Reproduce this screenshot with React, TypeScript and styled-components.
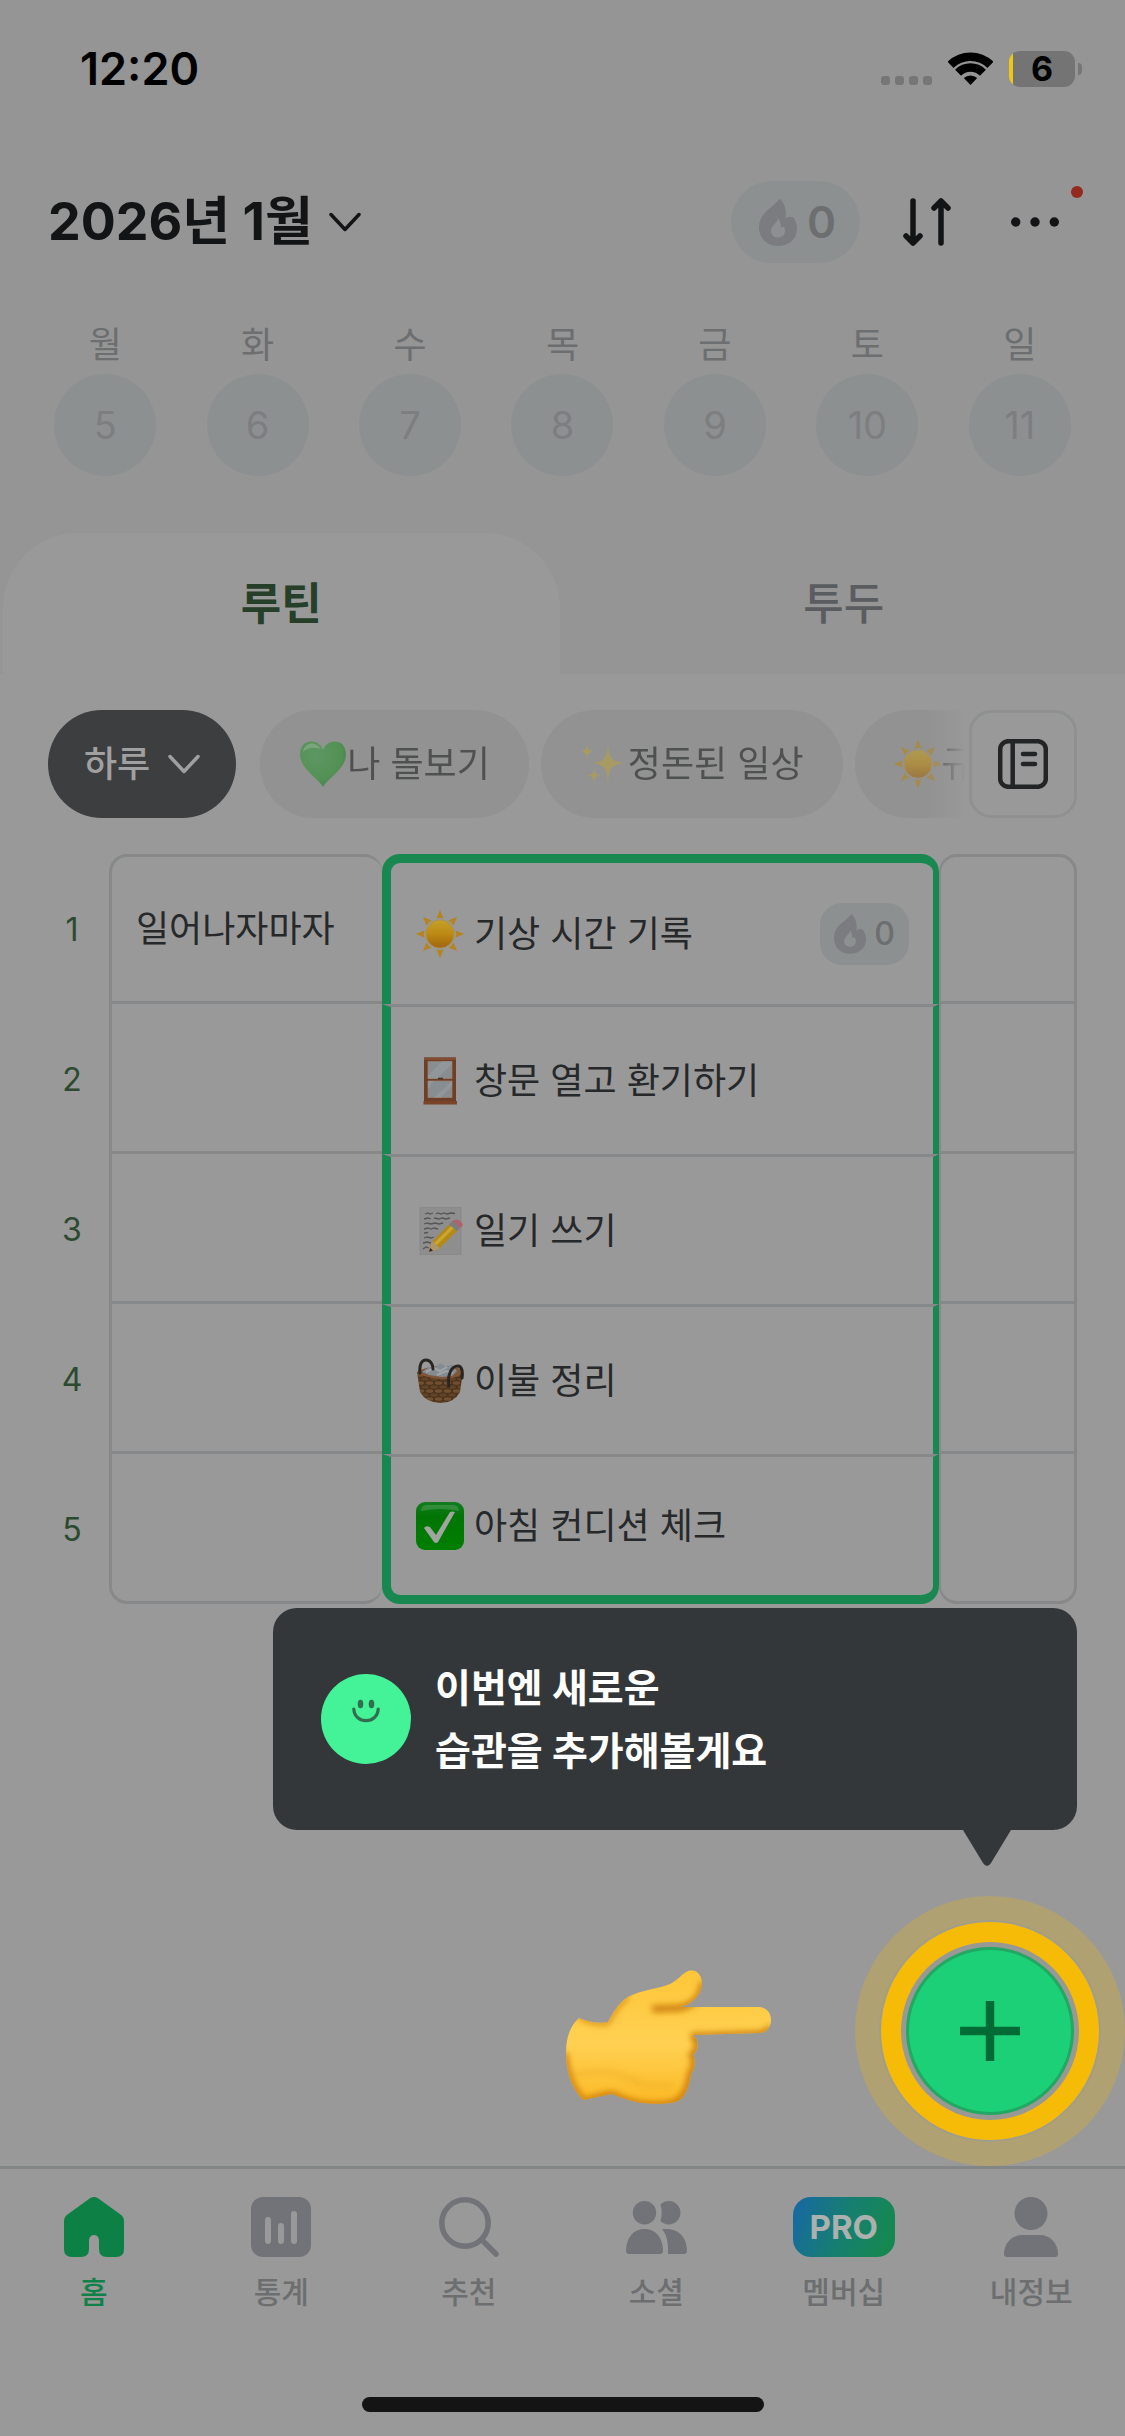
import React from 'react';
import styled, { createGlobalStyle } from 'styled-components';

const color = {
  header: '#959595',
  surface: '#999999',
  ink: '#131415',
  text: '#26282a',
  muted: '#6c6e70',
  icon: '#717378',
  line: '#868889',
  pill: '#8d9091',
  chip: '#929292',
  flame: '#7a7c7f',
  green: '#188850',
  dark: '#343739',
};

const GlobalStyle = createGlobalStyle`
  *, *::before, *::after { box-sizing: border-box; }
  body {
    margin: 0;
    background: ${color.surface};
    color: ${color.text};
    font-family: Inter, 'Noto Sans CJK KR', 'Noto Sans', sans-serif;
  }
  button {
    margin: 0;
    padding: 0;
    border: 0;
    background: none;
    color: inherit;
    font: inherit;
    cursor: pointer;
  }
  svg { display: block; flex: none; }
`;

const Page = styled.div`
  display: flex;
  flex-direction: column;
  min-height: 100vh;
  background: ${color.surface};
`;

const Top = styled.header`
  background: ${color.header};
`;

const StatusBar = styled.div`
  display: flex;
  align-items: center;
  justify-content: space-between;
  height: 138px;
  padding: 0 43px 0 80px;
  color: #000;
`;

const Clock = styled.time`
  font-size: 45px;
  font-weight: 600;
  line-height: 56px;
`;

const StatusIcons = styled.div`
  display: flex;
  align-items: flex-end;
  gap: 16px;
`;

const Signal = styled.div`
  display: flex;
  gap: 5px;
  padding-bottom: 2px;
`;

const SignalDot = styled.span`
  width: 9px;
  height: 9px;
  border-radius: 3px;
  background: #767676;
`;

const WifiWrap = styled.div`
  padding-bottom: 2px;
`;

const Battery = styled.div`
  display: flex;
  align-items: center;
  gap: 3px;
`;

const BatteryBody = styled.div`
  width: 66px;
  height: 36px;
  border-radius: 11px;
  background: linear-gradient(to right, #f0c814 4px, #747474 4px);
  font-size: 34px;
  font-weight: 700;
  line-height: 36px;
  text-align: center;
`;

const BatteryCap = styled.span`
  width: 4px;
  height: 12px;
  border-radius: 0 4px 4px 0;
  background: #767676;
`;

const TitleRow = styled.div`
  display: flex;
  align-items: center;
  justify-content: space-between;
  padding: 43px 66px 0 48px;
`;

const MonthButton = styled.button`
  display: flex;
  align-items: center;
  gap: 16px;
  color: ${color.ink};
  font-size: 52px;
  font-weight: 700;
  line-height: 64px;
`;

const Actions = styled.div`
  display: flex;
  align-items: center;
`;

const StreakPill = styled.button`
  display: flex;
  align-items: center;
  gap: 10px;
  height: 82px;
  margin-right: 43px;
  padding: 0 24px 0 28px;
  border-radius: 41px;
  background: ${color.pill};
  color: ${color.muted};
  font-size: 44px;
  font-weight: 600;
  line-height: 56px;
`;

const MoreButton = styled.button`
  position: relative;
  margin-left: 60px;
`;

const NewDot = styled.span`
  position: absolute;
  top: -12px;
  right: -24px;
  width: 12px;
  height: 12px;
  border-radius: 50%;
  background: #94291f;
`;

const Week = styled.div`
  display: grid;
  grid-template-columns: repeat(7, 1fr);
  padding: 58px 29px 57px;
`;

const Day = styled.button`
  display: flex;
  flex-direction: column;
  align-items: center;
  gap: 5px;
`;

const Weekday = styled.span`
  color: ${color.muted};
  font-size: 36px;
  line-height: 48px;
`;

const DayNumber = styled.span`
  width: 102px;
  height: 102px;
  border-radius: 50%;
  background: ${color.pill};
  color: #7c7e80;
  font-size: 38px;
  line-height: 102px;
  text-align: center;
`;

const Tabs = styled.div`
  display: grid;
  grid-template-columns: 1fr 1fr;
`;

const Tab = styled.button<{ $active?: boolean }>`
  height: 141px;
  margin: 0 3px;
  border-radius: 75px 75px 0 0;
  background: ${(p) => (p.$active ? color.surface : 'transparent')};
  color: ${(p) => (p.$active ? '#263f29' : '#5a5c5f')};
  font-size: 44px;
  font-weight: ${(p) => (p.$active ? 700 : 500)};
  line-height: 56px;
`;

const Main = styled.main`
  position: relative;
  flex: 1;
  padding: 36px 48px 562px;
`;

const Filters = styled.div`
  display: flex;
  margin-bottom: 36px;
`;

const DayFilter = styled.button`
  display: flex;
  align-items: center;
  gap: 18px;
  height: 108px;
  padding: 0 36px;
  border-radius: 54px;
  background: #3c3e40;
  color: #a0a0a0;
  font-size: 36px;
  font-weight: 500;
  line-height: 48px;
  white-space: nowrap;
`;

const ChipScroller = styled.div`
  display: flex;
  flex: 1;
  gap: 12px;
  min-width: 0;
  margin-left: 24px;
  overflow: hidden;
  mask-image: linear-gradient(to right, #000 calc(100% - 40px), transparent calc(100% - 4px));
`;

const Chip = styled.button`
  display: flex;
  flex: none;
  align-items: center;
  height: 108px;
  padding: 0 39px;
  border-radius: 54px;
  background: ${color.chip};
  color: #4f5050;
  font-size: 36px;
  line-height: 48px;
  white-space: nowrap;

  svg { opacity: 0.6; }
`;

const BookButton = styled.button`
  display: grid;
  place-items: center;
  width: 108px;
  height: 108px;
  border: 3px solid #8f9091;
  border-radius: 22px;
`;

const Board = styled.table`
  width: 100%;
  table-layout: fixed;
  border-spacing: 0;
  font-size: 36px;
  line-height: 48px;
`;

const NumberCol = styled.col`
  width: 61px;
`;

const TimeCol = styled.col`
  width: 273px;
`;

const RestCol = styled.col`
  width: 138px;
`;

const RowNumber = styled.th`
  height: 150px;
  padding: 2px 13px 0 0;
  color: #2b4a2f;
  font-size: 32px;
  font-weight: 400;
  text-align: center;
`;

const TimeCell = styled.td`
  padding: 0 0 0 24px;
  border: 0 solid ${color.line};
  border-width: 0 0 3px 3px;
  white-space: nowrap;

  tr:first-child & {
    border-top-width: 3px;
    border-radius: 18px 18px 0 0;
  }
  tr:last-child & { border-radius: 0 0 18px 18px; }
`;

const HabitCell = styled.td`
  padding: 0 24px 0 25px;
  border: solid ${color.green};
  border-width: 3px 6px 0 9px;
  border-top-color: ${color.line};

  tr:first-child & {
    border-top: 9px solid ${color.green};
    border-radius: 18px 18px 0 0;
  }
  tr:last-child & {
    border-bottom-width: 9px;
    border-radius: 0 0 18px 18px;
  }
`;

const RestCell = styled.td`
  padding: 0;
  border: 0 solid ${color.line};
  border-width: 0 3px 3px 2px;

  tr:first-child & {
    border-top-width: 3px;
    border-radius: 18px 18px 0 0;
  }
  tr:last-child & { border-radius: 0 0 18px 18px; }
`;

const Habit = styled.div`
  display: flex;
  align-items: center;
  gap: 10px;
`;

const HabitName = styled.span`
  flex: 1;
`;

const StreakBadge = styled.span`
  display: flex;
  align-items: center;
  gap: 8px;
  height: 62px;
  padding: 0 14px;
  border-radius: 22px;
  background: ${color.pill};
  color: ${color.muted};
  font-size: 32px;
  font-weight: 500;
`;

const Tooltip = styled.div`
  position: absolute;
  right: 48px;
  bottom: 336px;
  display: flex;
  align-items: center;
  gap: 24px;
  width: calc(100% - 321px);
  height: 222px;
  padding: 0 48px;
  border-radius: 24px;
  background: ${color.dark};
  color: #fff;
  font-size: 39px;
  font-weight: 700;
  line-height: 63px;
`;

const TooltipArrow = styled.svg`
  position: absolute;
  top: 100%;
  right: 66px;
`;

const PointingHand = styled.div`
  position: absolute;
  right: 354px;
  bottom: 62px;
`;

const AddButton = styled.button`
  position: absolute;
  right: 51px;
  bottom: 51px;
  display: grid;
  place-items: center;
  width: 168px;
  height: 168px;
  border: 3px solid #22a862;
  border-radius: 50%;
  background: #1bd076;
  box-shadow: 0 0 0 5px #989894, 0 0 0 25px #f6bb07, 0 0 0 27px #a19d8d, 0 0 0 51px #b0a172;
`;

const BottomNav = styled.nav`
  display: grid;
  grid-template-columns: repeat(6, 1fr);
  padding-top: 28px;
  border-top: 3px solid #838686;
`;

const NavLink = styled.a<{ $active?: boolean }>`
  display: flex;
  flex-direction: column;
  align-items: center;
  gap: 15px;
  color: ${(p) => (p.$active ? '#11814a' : color.muted)};
  font-size: 30px;
  font-weight: 500;
  line-height: 40px;
  text-decoration: none;
`;

const NavIcon = styled.span<{ $active?: boolean }>`
  display: grid;
  place-items: center;
  height: 60px;
  color: ${(p) => (p.$active ? '#0d8045' : color.icon)};
`;

const ProBadge = styled.span`
  width: 102px;
  height: 60px;
  border-radius: 18px;
  background: linear-gradient(110deg, #176a9f 5%, #177f70 50%, #158851 90%);
  color: #acb0af;
  font-size: 33px;
  font-weight: 700;
  line-height: 60px;
  text-align: center;
`;

const HomeIndicator = styled.div`
  width: 402px;
  height: 15px;
  margin: 85px auto 24px;
  border-radius: 8px;
  background: #141414;
`;

const Chevron = () => (
  <svg width="32" height="20" viewBox="0 0 32 20" fill="none" stroke="currentColor" strokeWidth="3.5" strokeLinecap="round" strokeLinejoin="round">
    <path d="M2 2.5 16 17.5 30 2.5" />
  </svg>
);

const Wifi = () => (
  <svg width="45" height="33" viewBox="0 0 45 33" fill="none" stroke="#000">
    <path d="M2.6 12.8A28.5 28.5 0 0 1 42.4 12.8" strokeWidth="8.6" />
    <path d="M10.1 20.7A17.5 17.5 0 0 1 34.9 20.7" strokeWidth="8.4" />
    <path d="M22.5 33 15.8 26.1A9.8 9.8 0 0 1 29.2 26.1Z" fill="#000" stroke="none" />
  </svg>
);

const Flame = ({ width, height }: { width: number; height: number }) => (
  <svg width={width} height={height} viewBox="0 0 38 47" fill={color.flame} fillRule="evenodd">
    <path d="M20 .6C21 0 21.500 .2 22 1C25.500 5 28 12 26.500 20C28 18.200 29 17.500 32 18C34 18 35 18.600 35.600 20.500C37 23 38 26 38 30C38 40 30 47 19 47C8 47 0 39.500 0 28.500C0 19 5 14 11 9C15 6 18 3 20 .6ZM19 19C18.500 24 12 27 12 32C12 36 15 38.500 19 38.500C23 38.500 26 36 26 32C26 28.500 24.500 26.500 22 28.500C21.800 25 21 21 19 19Z" />
  </svg>
);

const SortIcon = () => (
  <svg width="48" height="48" viewBox="0 0 48 48" fill="none" stroke={color.ink} strokeWidth="5.500" strokeLinecap="round" strokeLinejoin="round">
    <path d="M10 3V44M3 38 10 45 17 38M38 45V4M31 10 38 3 45 10" />
  </svg>
);

const MoreIcon = () => (
  <svg width="48" height="48" viewBox="0 0 48 48" fill={color.ink}>
    <circle cx="4.700" cy="24" r="4.700" />
    <circle cx="24" cy="24" r="4.700" />
    <circle cx="43.300" cy="24" r="4.700" />
  </svg>
);

const BookIcon = () => (
  <svg width="50" height="50" viewBox="0 0 50 50" fill="none" stroke="#222425" strokeWidth="4.500" strokeLinecap="round">
    <rect x="2.200" y="2.200" width="45.600" height="45.600" rx="8" />
    <path d="M14.700 3V47M25 15H37M25 25H37" />
  </svg>
);

const Sun = () => (
  <svg width="48" height="48" viewBox="0 0 48 48">
    <defs>
      <linearGradient id="sunBody" x1="0" y1="0" x2="0" y2="1">
        <stop offset="0" stopColor="#c3a229" />
        <stop offset=".5" stopColor="#bd8a12" />
        <stop offset="1" stopColor="#a06410" />
      </linearGradient>
    </defs>
    {[0, 45, 90, 135, 180, 225, 270, 315].map((angle) => (
      <path key={angle} d="M24 0 27.500 8.500Q24 7 20.500 8.500Z" fill="#b5841a" transform={`rotate(${angle} 24 24)`} />
    ))}
    <circle cx="24" cy="24" r="14.200" fill="url(#sunBody)" stroke="#ad8d5c" strokeWidth="1" />
  </svg>
);

const Heart = () => (
  <svg width="48" height="48" viewBox="0 0 48 48">
    <defs>
      <radialGradient id="heartFill" cx=".35" cy=".3" r=".8">
        <stop offset="0" stopColor="#3c9a45" />
        <stop offset=".7" stopColor="#28902b" />
        <stop offset="1" stopColor="#146f26" />
      </radialGradient>
    </defs>
    <path d="M24 47C20 39 1 29 1 14.500C1 6 6 1.500 12.500 1.500C18 1.500 22 5 24 10C26 5 30 1.500 35.500 1.500C42 1.500 47 6 47 14.500C47 29 28 39 24 47Z" fill="url(#heartFill)" />
    <path d="M4 12C5 6 9 3.500 13 3.500C17 3.500 20 6 21.500 9C16 7 9 7 4 12Z" fill="#8fc493" opacity=".6" />
  </svg>
);

const Sparkles = () => (
  <svg width="48" height="48" viewBox="0 0 48 48" fill="#b5a245">
    <path d="M28 3C29 18 31 21 44 23C31 25 29 28 28 44C27 28 25 25 13 23C25 21 27 18 28 3Z" />
    <path d="M7 3C7.500 9 8 10 13 11.500C8 13 7.500 14 7 20C6.500 14 6 13 1 11.500C6 10 6.500 9 7 3Z" />
    <path d="M14 27C14.500 33 15 34 20 35.500C15 37 14.500 38 14 44C13.500 38 13 37 8 35.500C13 34 13.500 33 14 27Z" />
  </svg>
);

const WindowEmoji = () => (
  <svg width="48" height="48" viewBox="0 0 48 48">
    <path d="M8 .5H40V44H8Z" fill="#6d3f28" />
    <path d="M8 .5H40V3H8Z" fill="#814c32" />
    <path d="M7.500 44H41V47.500H7.500Z" fill="#7b4429" />
    <path d="M12 4.500H36V21.500H12ZM12 24H36V40.500H12Z" fill="#878d91" stroke="#9d7c69" strokeWidth=".8" />
    <path d="M26 4.500H36V7L21 21.500H12V18.500ZM18 24 12 32V24ZM25 40.500 36 29V24L18 40.500Z" fill="#90969a" />
    <path d="M22 21.500H27" stroke="#47352b" strokeWidth="1.500" />
  </svg>
);

const MemoEmoji = () => (
  <svg width="48" height="48" viewBox="0 0 48 48">
    <path d="M4 0H45V48H4Z" fill="#8e8e8e" stroke="#878787" strokeWidth=".8" />
    <path
      d="M9 7l3-1 2 1 3-1m3 1 2-1 3 1 3-1 3 1 4-1 4 .500M8 12l4-1 3 1m3-1 5 1 3-1 4 1 4-1M8 17l3-1 4 1 4-1 4 1 4-1M8 22l4-1 3 1 3-1 4 1M8 26l4-.500M8 31l3-1 4 1 3-1M7 36l4-1 4 1M7 42l3-2 3 1"
      fill="none"
      stroke="#555555"
      strokeWidth="1.300"
    />
    <path d="M13 45 16 35 36 14.500 44 21 23 42Z" fill="#b28a18" />
    <path d="M18 36 38 16.500 40.500 18.500 20 39Z" fill="#cba52c" />
    <path d="M13 45 16 35Q20 35 20 38.500Q24 39 23 42Z" fill="#ad956c" />
    <path d="M13 45 14.200 41 17 43.500Z" fill="#292929" />
    <path d="M33 17.500 36.500 14 44 21 41 24Z" fill="#777d80" />
    <path d="M36.500 14Q41 11 45 15Q49 18 44 21Z" fill="#ad626c" />
  </svg>
);

const BasketEmoji = () => (
  <svg width="48" height="48" viewBox="0 0 48 48">
    <defs>
      <pattern id="weave" width="9" height="8" patternUnits="userSpaceOnUse">
        <rect width="9" height="8" fill="#4b321d" />
        <ellipse cx="4.500" cy="2" rx="3.800" ry="1.800" fill="#70502f" />
        <ellipse cx="0" cy="6" rx="3.800" ry="1.800" fill="#624325" />
        <ellipse cx="9" cy="6" rx="3.800" ry="1.800" fill="#624325" />
      </pattern>
    </defs>
    <path d="M1 15Q24 8 47 14L44 35Q38 46 25 46Q10 46 4 35Z" fill="url(#weave)" />
    <path d="M1 15Q8 10 24 9Q42 9 47 14Q44 21 27 22Q7 21 1 15Z" fill="#815537" />
    <path d="M6 15 13 10 20 10 24 6 29 9 36 8 41 14 36 19 26 20 13 18Z" fill="#848b91" />
    <path d="M10 15 18 11 24 14 31 10M21 18 30 14 37 16" fill="none" stroke="#9fa5a9" strokeWidth="2" />
    <path d="M4 16C3 7 6 3 10 3C14 3 17 7 17 12M33 29C31 19 35 9 42 9C46 9 47 15 46 21" fill="none" stroke="#292521" strokeWidth="3" strokeLinecap="round" />
  </svg>
);

const CheckEmoji = () => (
  <svg width="48" height="48" viewBox="0 0 48 48">
    <defs>
      <linearGradient id="checkFill" x1="0" y1="0" x2="0" y2="1">
        <stop offset="0" stopColor="#147c20" />
        <stop offset=".3" stopColor="#007504" />
        <stop offset="1" stopColor="#007f00" />
      </linearGradient>
    </defs>
    <rect width="48" height="48" rx="9" fill="url(#checkFill)" />
    <path d="M5 9Q5 3 11 3H37Q43 3 43 9Q24 5 5 9Z" fill="#4b9a53" opacity=".6" />
    <path d="M8 26Q10 23 14 25L20 33L34 10Q36 9 39 10L22 40Q20 42 18 40Z" fill="#a0a59f" />
  </svg>
);

const Face = () => (
  <svg width="90" height="90" viewBox="0 0 90 90">
    <circle cx="45" cy="45" r="45" fill="#44f298" />
    <g fill="#316d4e">
      <ellipse cx="39.500" cy="30" rx="2.800" ry="4.300" />
      <ellipse cx="50.500" cy="30" rx="2.800" ry="4.300" />
    </g>
    <path d="M32.800 35C33.500 50.500 56.500 50.500 57.200 35" fill="none" stroke="#316d4e" strokeWidth="3.200" strokeLinecap="round" />
  </svg>
);

const handOutline =
  'M13 48C22 52 34 54 42 52C48 40 54 32 62 27C74 20 92 19 104 14C113 10 116 3 123 .800C131 -1 136 6 136 13C136 25 126 34 115 37H194C201 38 205 43 205 50C205 57 201 63 193 63L127 65C133 70 133 80 127 85C130 91 129 99 125 104C124 114 120 124 115 129C108 135 88 134 76 133C64 131 54 127 46 124C36 126 26 128 17 130C5 117 0 101 0 83C0 66 5 55 13 48Z';

const Hand = () => (
  <svg width="205" height="134" viewBox="0 0 205 134" role="img" aria-label="오른쪽을 가리키는 손">
    <defs>
      <clipPath id="handClip"><path d={handOutline} /></clipPath>
      <linearGradient id="handFill" x1="0" y1="0" x2="0" y2="1">
        <stop offset="0" stopColor="#ffc638" />
        <stop offset=".55" stopColor="#ffd152" />
        <stop offset="1" stopColor="#fcb926" />
      </linearGradient>
      <filter id="handSoft" x="-20%" y="-20%" width="140%" height="140%">
        <feGaussianBlur stdDeviation="3" />
      </filter>
    </defs>
    <path d={handOutline} fill="url(#handFill)" />
    <g clipPath="url(#handClip)">
      <g filter="url(#handSoft)" fill="none" stroke="#cd7f10">
        <path d="M137 12C137 27 126 36 113 38L86 39" strokeWidth="7" />
        <path d="M205 57Q202 65 192 65L125 67" strokeWidth="8" />
        <path d="M127 65C134 71 134 80 127 85C131 91 129 99 125 104C124 114 120 124 115 129C108 137 88 136 76 135C64 133 54 129 46 125C36 126 26 130 17 132" strokeWidth="8" />
        <path d="M12 46C22 51 34 54 42 52C48 40 54 32 62 27" strokeWidth="5" opacity=".8" />
        <path d="M-1 83C0 101 5 117 17 130" strokeWidth="6" />
        <path d="M5 105Q42 97 62 108T108 115" stroke="#ecac22" strokeWidth="5" opacity=".5" />
      </g>
    </g>
  </svg>
);

const PlusIcon = () => (
  <svg width="60" height="60" viewBox="0 0 60 60" stroke="#006b35" strokeWidth="8.500">
    <path d="M30 0V60M0 30H60" />
  </svg>
);

const HomeIcon = () => (
  <svg width="60" height="60" viewBox="0 0 60 60" fill="currentColor">
    <path d="M26 1.300Q30-1.300 34 1.300L56.500 17.500Q60 20 60 24V52Q60 60 52 60H43Q35 60 35 52V43A5 5 0 0 0 25 43V52Q25 60 17 60H8Q0 60 0 52V24Q0 20 3.500 17.500Z" />
  </svg>
);

const StatsIcon = () => (
  <svg width="60" height="60" viewBox="0 0 60 60">
    <rect width="60" height="60" rx="12" fill="currentColor" />
    <path d="M17 23V44M30 29V44M43 17V44" stroke={color.surface} strokeWidth="6" strokeLinecap="round" />
  </svg>
);

const SearchIcon = () => (
  <svg width="60" height="60" viewBox="0 0 60 60" fill="none" stroke="currentColor" strokeWidth="5.500" strokeLinecap="round">
    <circle cx="26" cy="26" r="23.200" />
    <path d="M43 43 57 57" />
  </svg>
);

const SocialIcon = () => (
  <svg width="61" height="53" viewBox="0 0 61 53" fill="currentColor">
    <circle cx="18.500" cy="11.700" r="11.700" />
    <path d="M0 50C0 36 8 28 18.500 28S37 36 37 50Q37 53 34 53H3Q0 53 0 50Z" />
    <path d="M34.500 3.500A11.700 11.700 0 1 1 34.500 20Q36.800 11.700 34.500 3.500Z" />
    <path d="M36 28.300C52 26 61 36 61 50Q61 53 58 53H42C42.500 42 41 34 36 28.300Z" />
  </svg>
);

const ProfileIcon = () => (
  <svg width="54" height="60" viewBox="0 0 54 60" fill="currentColor">
    <circle cx="27" cy="16.500" r="16.500" />
    <path d="M0 57C0 46 8 38 18 38H36C46 38 54 46 54 57Q54 60 51 60H3Q0 60 0 57Z" />
  </svg>
);

const days = [
  ['월', 5],
  ['화', 6],
  ['수', 7],
  ['목', 8],
  ['금', 9],
  ['토', 10],
  ['일', 11],
] as const;

const chips = [
  { icon: <Heart />, label: '나 돌보기' },
  { icon: <Sparkles />, label: '정돈된 일상' },
  { icon: <Sun />, label: '규칙적인' },
];

const habits = [
  { time: '일어나자마자', icon: <Sun />, name: '기상 시간 기록', streak: 0 },
  { time: '', icon: <WindowEmoji />, name: '창문 열고 환기하기' },
  { time: '', icon: <MemoEmoji />, name: '일기 쓰기' },
  { time: '', icon: <BasketEmoji />, name: '이불 정리' },
  { time: '', icon: <CheckEmoji />, name: '아침 컨디션 체크' },
];

const navItems = [
  { label: '홈', icon: <HomeIcon />, active: true },
  { label: '통계', icon: <StatsIcon /> },
  { label: '추천', icon: <SearchIcon /> },
  { label: '소셜', icon: <SocialIcon /> },
  { label: '멤버십', icon: <ProBadge>PRO</ProBadge> },
  { label: '내정보', icon: <ProfileIcon /> },
];

export default function App() {
  return (
    <Page>
      <GlobalStyle />
      <Top>
        <StatusBar>
          <Clock>12:20</Clock>
          <StatusIcons>
            <Signal>
              <SignalDot />
              <SignalDot />
              <SignalDot />
              <SignalDot />
            </Signal>
            <WifiWrap>
              <Wifi />
            </WifiWrap>
            <Battery>
              <BatteryBody>6</BatteryBody>
              <BatteryCap />
            </Battery>
          </StatusIcons>
        </StatusBar>
        <TitleRow>
          <MonthButton>
            2026년 1월
            <Chevron />
          </MonthButton>
          <Actions>
            <StreakPill>
              <Flame width={38} height={47} />0
            </StreakPill>
            <button aria-label="정렬">
              <SortIcon />
            </button>
            <MoreButton aria-label="더보기">
              <MoreIcon />
              <NewDot />
            </MoreButton>
          </Actions>
        </TitleRow>
        <Week>
          {days.map(([name, date]) => (
            <Day key={date}>
              <Weekday>{name}</Weekday>
              <DayNumber>{date}</DayNumber>
            </Day>
          ))}
        </Week>
        <Tabs role="tablist">
          <Tab role="tab" aria-selected="true" $active>
            루틴
          </Tab>
          <Tab role="tab" aria-selected="false">
            투두
          </Tab>
        </Tabs>
      </Top>

      <Main>
        <Filters>
          <DayFilter>
            하루
            <Chevron />
          </DayFilter>
          <ChipScroller>
            {chips.map((chip) => (
              <Chip key={chip.label}>
                {chip.icon}
                {chip.label}
              </Chip>
            ))}
          </ChipScroller>
          <BookButton aria-label="루틴 목록">
            <BookIcon />
          </BookButton>
        </Filters>

        <Board>
          <colgroup>
            <NumberCol />
            <TimeCol />
            <col />
            <RestCol />
          </colgroup>
          <tbody>
            {habits.map((habit, index) => (
              <tr key={habit.name}>
                <RowNumber scope="row">{index + 1}</RowNumber>
                <TimeCell>{habit.time}</TimeCell>
                <HabitCell>
                  <Habit>
                    {habit.icon}
                    <HabitName>{habit.name}</HabitName>
                    {habit.streak !== undefined && (
                      <StreakBadge>
                        <Flame width={32} height={40} />
                        {habit.streak}
                      </StreakBadge>
                    )}
                  </Habit>
                </HabitCell>
                <RestCell />
              </tr>
            ))}
          </tbody>
        </Board>

        <Tooltip role="status">
          <Face />
          <div>
            이번엔 새로운
            <br />
            습관을 추가해볼게요
          </div>
          <TooltipArrow width="48" height="36" viewBox="0 0 48 36" fill={color.dark}>
            <path d="M0 0H48L28 33Q24 39 20 33Z" />
          </TooltipArrow>
        </Tooltip>
        <PointingHand>
          <Hand />
        </PointingHand>
        <AddButton aria-label="습관 추가">
          <PlusIcon />
        </AddButton>
      </Main>

      <BottomNav>
        {navItems.map((item) => (
          <NavLink key={item.label} href="#" $active={item.active}>
            <NavIcon $active={item.active}>{item.icon}</NavIcon>
            {item.label}
          </NavLink>
        ))}
      </BottomNav>
      <HomeIndicator />
    </Page>
  );
}
